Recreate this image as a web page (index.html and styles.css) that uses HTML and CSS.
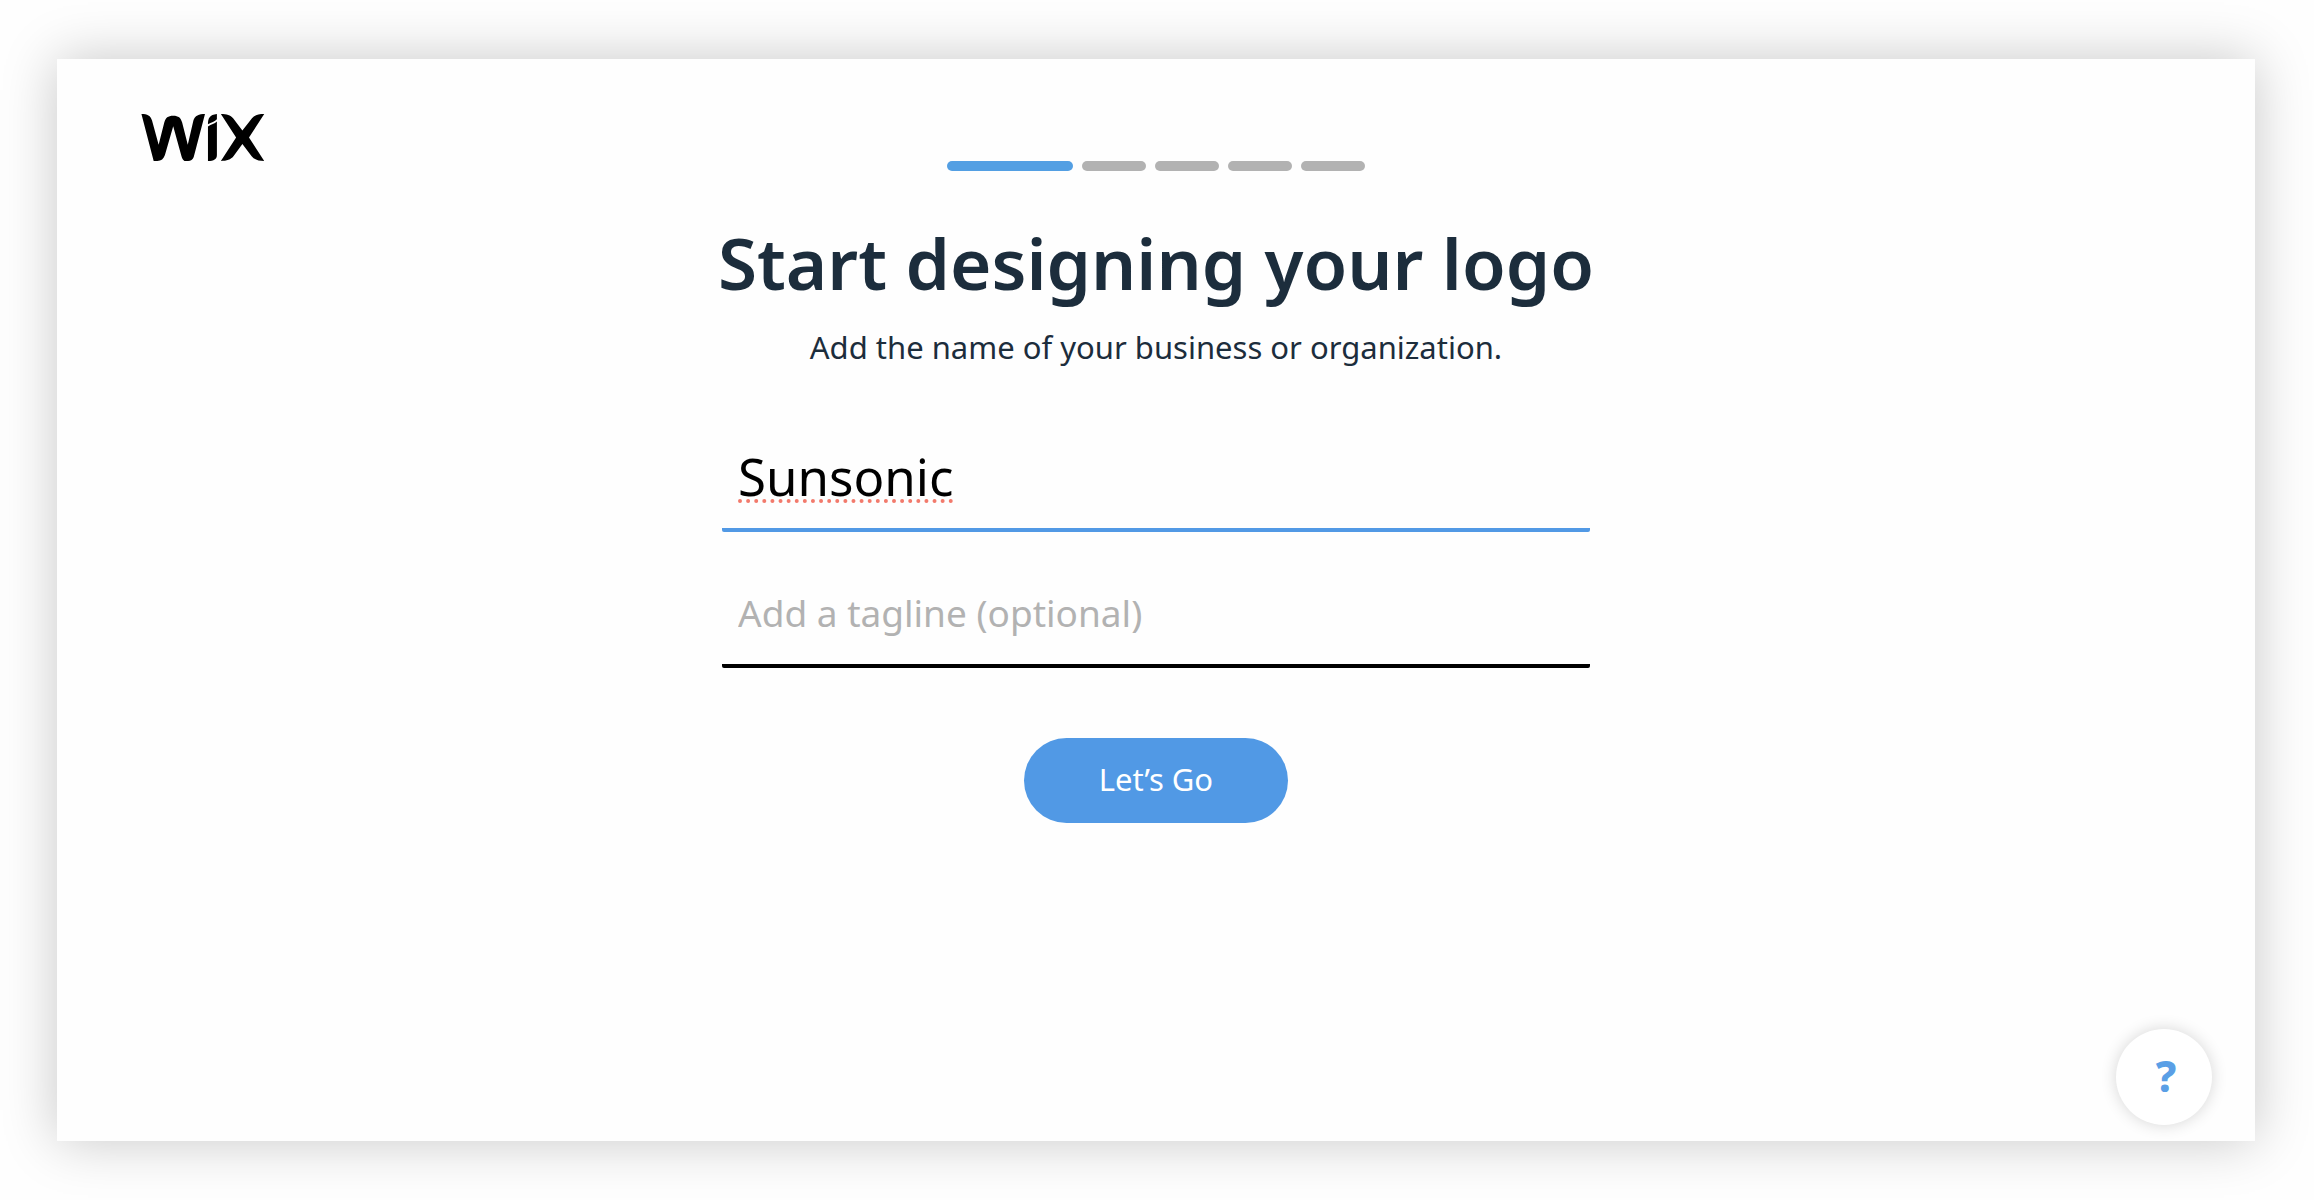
FILE: index.html
```html
<!DOCTYPE html>
<html lang="en">
<head>
<meta charset="utf-8">
<meta name="viewport" content="width=device-width, initial-scale=1">
<title>Wix Logo Maker</title>
<link rel="stylesheet" href="styles.css">
</head>
<body>
<div class="card">
  <header class="header">
    <a class="logo" href="#" aria-label="Wix">
      <svg viewBox="63 72 372 142" aria-hidden="true">
        <path d="M63 72C81 72 91 77 95 92L115 165L132 98C136 83 143 77 159 77S182 83 186 98L203 165L220 92C224 77 237 72 255 72L221 202C218 210 212 214 204 214H193C188 211 186 207 184 200L159 109L134 196C130 208 123 214 111 214H100Z"/>
        <path d="M291 72V88C285 96 274 97 264 103C264 85 269 74 291 72Z"/>
        <path d="M291 95V196C291 209 282 214 264 214V110C274 103 284 103 291 95Z"/>
        <path d="M303 72C321 72 332 75 340 85L368 122L397 85C405 75 417 72 434 72L388 143L434 214C417 214 404 210 396 200L368 163L341 200C333 210 321 214 303 214L349 143Z"/>
      </svg>
    </a>
  </header>
  <main class="main">
    <ol class="progress" aria-label="Step 1 of 5">
      <li class="step step-active"></li>
      <li class="step"></li>
      <li class="step"></li>
      <li class="step"></li>
      <li class="step"></li>
    </ol>
    <h1 class="title">Start designing your logo</h1>
    <p class="subtitle">Add the name of your business or organization.</p>
    <form class="form">
      <input class="field field-name" type="text" value="Sunsonic" aria-label="Business name" spellcheck="false">
      <input class="field field-tagline" type="text" placeholder="Add a tagline (optional)" aria-label="Tagline">
      <button class="submit" type="button">Let’s Go</button>
    </form>
  </main>
  <button class="help" type="button" aria-label="Help">?</button>
</div>
</body>
</html>
```
FILE: styles.css
```css
*,
*::before,
*::after {
  box-sizing: border-box;
}

body {
  margin: 0;
  padding: 59px 59px 59px 57px;
  background: #fefefe;
  color: #1c2d3c;
  font-family: "Noto Sans", sans-serif;
}

.card {
  position: relative;
  min-height: calc(100vh - 118px);
  background: #fefefe;
  box-shadow: 0 0 52px rgba(0, 0, 0, 0.22);
}

.header {
  padding: 55px 84px 0;
}

.logo {
  display: block;
  width: 124px;
}

.logo svg {
  display: block;
  width: 100%;
  height: 47px;
  fill: #000;
}

.main {
  display: flex;
  flex-direction: column;
  align-items: center;
  padding-bottom: 160px;
}

.progress {
  display: flex;
  gap: 9px;
  margin: 0;
  padding: 0;
  list-style: none;
}

.step {
  width: 64px;
  height: 10px;
  border-radius: 5px;
  background: #b2b2b2;
}

.step-active {
  width: 126px;
  background: #539fe3;
}

.title {
  margin: 48px 0 0;
  font-size: 71px;
  font-weight: 600;
  line-height: 88px;
}

.subtitle {
  margin: 20px 0 0;
  font-size: 31px;
  font-weight: 400;
  line-height: 40px;
}

.form {
  display: flex;
  flex-direction: column;
  align-items: center;
  width: 100%;
  max-width: 868px;
  margin-top: 73px;
}

.field {
  width: 100%;
  padding: 0 16px;
  border: 0;
  border-bottom: 4px solid #000;
  border-radius: 2px;
  outline: 0;
  background: transparent;
  color: #000;
  font-family: inherit;
}

.field-name {
  height: 92px;
  padding-bottom: 16px;
  border-color: #5199e5;
  font-size: 51px;
  text-decoration: underline dotted 4px #f27a6c;
  text-decoration-skip-ink: none;
  text-underline-offset: 3px;
}

.field-tagline {
  height: 84px;
  margin-top: 52px;
  padding-bottom: 24px;
  font-size: 37px;
}

.field::placeholder {
  color: #b2b2b2;
  opacity: 1;
}

.submit {
  width: 264px;
  height: 85px;
  margin-top: 70px;
  padding: 0 0 4px;
  border: 0;
  border-radius: 43px;
  background: #5199e5;
  color: #fff;
  font-family: inherit;
  font-size: 31px;
}

.help {
  position: absolute;
  right: 43px;
  bottom: 16px;
  width: 96px;
  height: 96px;
  padding: 0 0 4px 4px;
  border: 0;
  border-radius: 50%;
  background: #fff;
  box-shadow: 0 0 16px rgba(0, 0, 0, 0.16);
  color: #5a9fe6;
  font-family: inherit;
  font-size: 42px;
  font-weight: 800;
}
```
